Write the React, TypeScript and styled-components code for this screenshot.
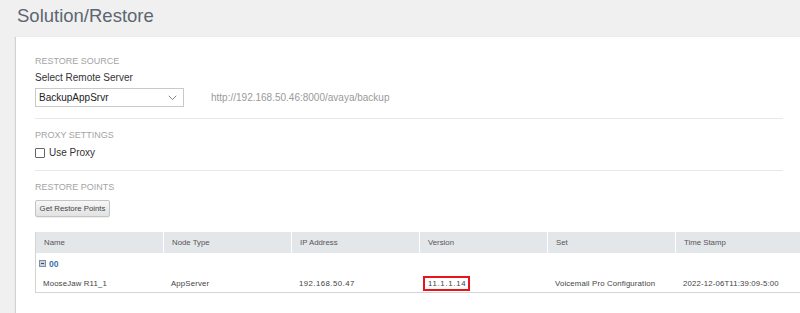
import React from "react";
import styled, { createGlobalStyle } from "styled-components";

const Global = createGlobalStyle`
  html, body { margin: 0; padding: 0; background: #f0f0f0; overflow: hidden; }
  body { font-family: "Liberation Sans", Arial, sans-serif; width: 800px; height: 313px; }
`;

const Page = styled.div`
  box-sizing: border-box;
  padding: 4px 0 0 16px;
  width: 800px;
  height: 313px;
  overflow: hidden;
  display: flex;
  flex-direction: column;
`;

const Title = styled.h1`
  margin: 0 0 0 1px;
  font-weight: normal;
  font-size: 18.5px;
  line-height: 24px;
  color: #5c6670;
  height: 33px;
  flex: none;
`;

const Card = styled.div`
  flex: 1;
  min-height: 0;
  overflow: hidden;
  background: #fff;
  box-shadow: -1px 0 1px rgba(0, 0, 0, 0.12);
  padding: 18px 0 0 19px;
`;

const Section = styled.section`
  width: 748px;
`;

const SectionLabel = styled.div`
  font-size: 9px;
  line-height: 12px;
  color: #a4a4a4;
  text-transform: uppercase;
`;

const FieldLabel = styled.div`
  margin-top: 4px;
  font-size: 10px;
  line-height: 13px;
  color: #333;
`;

const Row = styled.div`
  display: flex;
  align-items: center;
  gap: 27px;
  margin-top: 4px;
`;

const SelectBox = styled.div`
  box-sizing: border-box;
  width: 149px;
  height: 19px;
  border: 1px solid #c9c9c9;
  background: #fff;
  display: flex;
  align-items: center;
  justify-content: space-between;
  padding: 0 6px 0 3px;
  font-size: 10px;
  color: #222;
`;

const Url = styled.span`
  font-size: 10px;
  color: #9a9a9a;
`;

const Divider = styled.hr<{ $top: number; $bottom: number }>`
  border: 0;
  border-top: 1px solid #e8e8e8;
  margin: ${(p) => `${p.$top}px 0 ${p.$bottom}px`};
`;

const CheckRow = styled.label`
  display: flex;
  align-items: center;
  gap: 4px;
  margin-top: 6px;
  font-size: 10px;
  color: #333;
`;

const CheckBox = styled.span`
  box-sizing: border-box;
  width: 10px;
  height: 10px;
  border: 1px solid #666;
  border-radius: 1px;
  background: #fff;
`;

const Button = styled.button`
  margin-top: 7px;
  box-sizing: border-box;
  width: 75px;
  height: 17px;
  padding: 0;
  border: 1px solid #c4c4c4;
  border-radius: 2px;
  background: linear-gradient(#f7f7f7, #e2e2e2);
  box-shadow: 0 1px 0 rgba(0, 0, 0, 0.06);
  font-family: "Liberation Sans", Arial, sans-serif;
  font-size: 7.8px;
  color: #444;
  display: block;
`;

const Table = styled.div`
  margin-top: 15px;
  width: 800px;
  border-left: 1px solid #d4d4d4;
  border-bottom: 1px solid #d4d4d4;
  box-sizing: border-box;
`;

const Grid = styled.div`
  display: grid;
  grid-template-columns: 128px 128px 128px 128px 128px 160px;
`;

const HeadCell = styled.div`
  height: 21px;
  background: #e4e7ea;
  border-right: 1px solid #fff;
  box-sizing: border-box;
  padding-left: 8px;
  display: flex;
  align-items: center;
  font-size: 7.8px;
  color: #555;
`;

const GroupRow = styled.div`
  height: 21px;
  display: flex;
  align-items: center;
  gap: 3px;
  padding-left: 3px;
  font-size: 8.5px;
  font-weight: bold;
  color: #3f72b5;
`;

const Expander = styled.span`
  box-sizing: border-box;
  width: 7px;
  height: 7px;
  border: 1px solid #7d8fa6;
  background: #c9d2dd;
  display: flex;
  align-items: center;
  justify-content: center;
  &::after {
    content: "";
    width: 3px;
    height: 1px;
    background: #3c4b60;
  }
`;

const Cell = styled.div`
  height: 18px;
  padding-left: 7px;
  display: flex;
  align-items: center;
  font-size: 7.8px;
  letter-spacing: 0.15px;
  color: #444;
  white-space: nowrap;
`;

const Digits = styled.span`
  letter-spacing: 0.45px;
`;

const Highlight = styled.span`
  border: 2px solid #e8141c;
  padding: 1px 2px 0 3px;
  margin-left: -4px;
  line-height: 10px;
  letter-spacing: 0.7px;
`;

const Chevron = () => (
  <svg width="9" height="6" viewBox="0 0 9 6">
    <path d="M0.8 0.8 L4.5 4.6 L8.2 0.8" fill="none" stroke="#777" strokeWidth="0.9" />
  </svg>
);

const headers = ["Name", "Node Type", "IP Address", "Version", "Set", "Time Stamp"];

export default function App() {
  return (
    <>
      <Global />
      <Page>
        <Title>Solution/Restore</Title>
        <Card>
          <Section>
            <SectionLabel>Restore Source</SectionLabel>
            <FieldLabel>Select Remote Server</FieldLabel>
            <Row>
              <SelectBox>
                <span>BackupAppSrvr</span>
                <Chevron />
              </SelectBox>
              <Url>http://192.168.50.46:8000/avaya/backup</Url>
            </Row>
            <Divider $top={11} $bottom={10} />
            <SectionLabel>Proxy Settings</SectionLabel>
            <CheckRow>
              <CheckBox />
              <span>Use Proxy</span>
            </CheckRow>
            <Divider $top={12} $bottom={10} />
            <SectionLabel>Restore Points</SectionLabel>
            <Button>Get Restore Points</Button>
          </Section>
          <Table>
            <Grid>
              {headers.map((h) => (
                <HeadCell key={h}>{h}</HeadCell>
              ))}
            </Grid>
            <GroupRow>
              <Expander />
              <span>00</span>
            </GroupRow>
            <Grid>
              <Cell>MooseJaw R11_1</Cell>
              <Cell>AppServer</Cell>
              <Cell>
                <Digits>192.168.50.47</Digits>
              </Cell>
              <Cell>
                <Highlight>11.1.1.14</Highlight>
              </Cell>
              <Cell>Voicemail Pro Configuration</Cell>
              <Cell>2022-12-06T11:39:09-5:00</Cell>
            </Grid>
          </Table>
        </Card>
      </Page>
    </>
  );
}
